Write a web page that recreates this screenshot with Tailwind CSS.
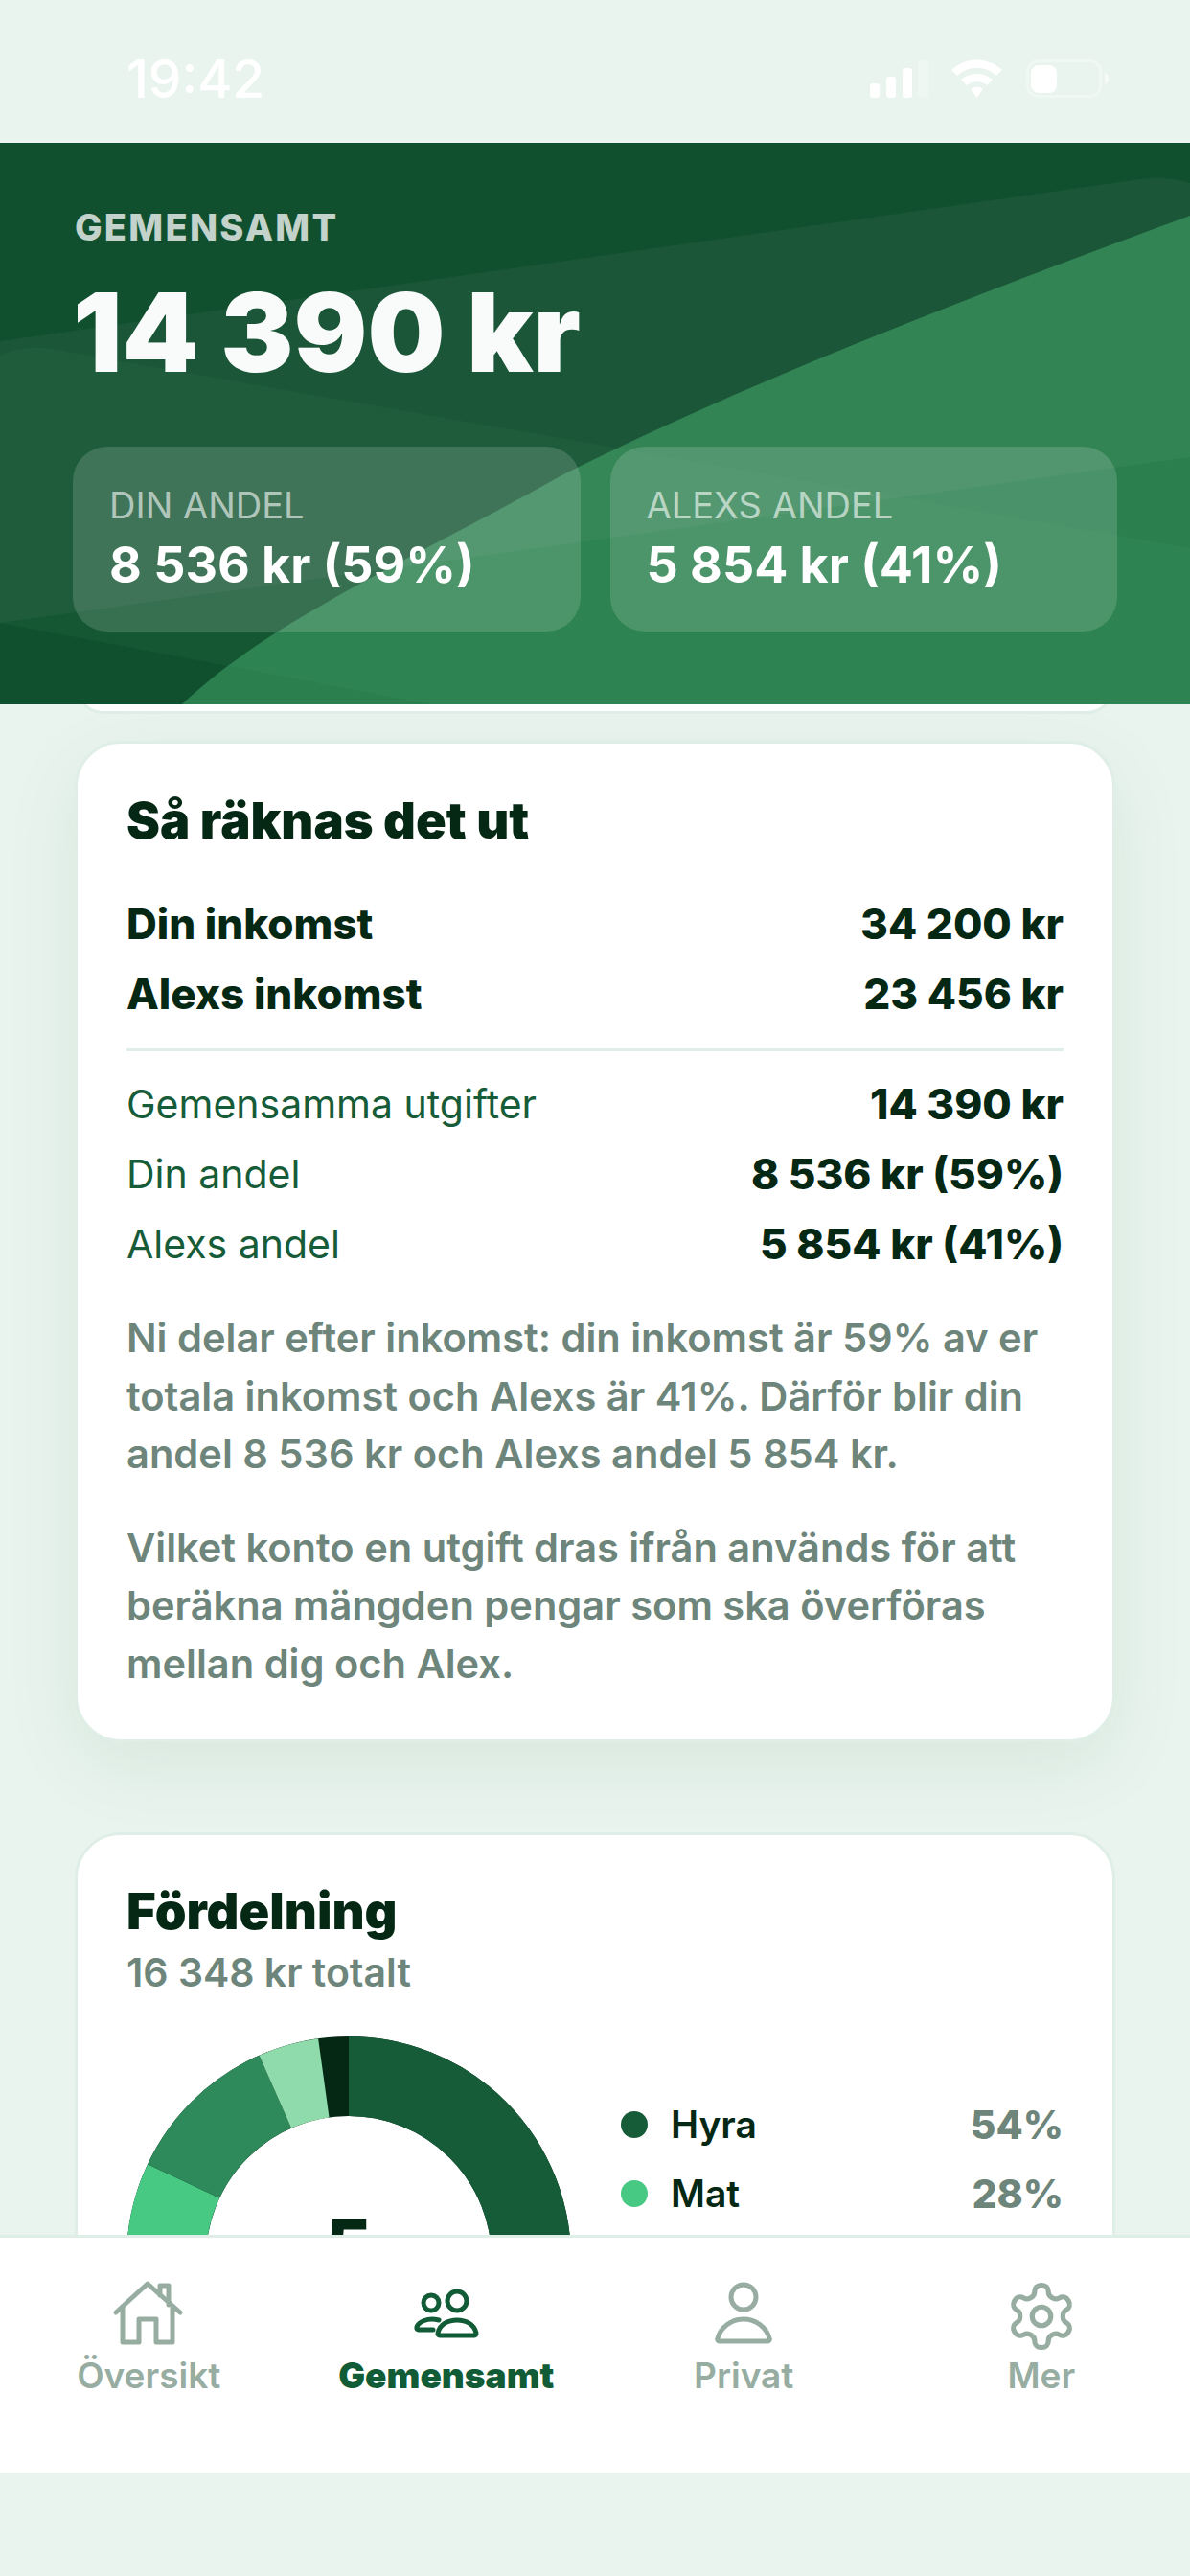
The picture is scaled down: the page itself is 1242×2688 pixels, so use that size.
<!DOCTYPE html>
<html lang="sv">
<head>
    <meta charset="UTF-8">
    <meta name="viewport" content="width=device-width, initial-scale=1.0">
    <title>Gemensamt</title>
    <script src="https://cdn.jsdelivr.net/npm/@tailwindcss/browser@4"></script>
</head>
<body class="bg-[#e9f4ee] font-['Inter',sans-serif] text-[#052814]">
    <div class="w-[1242px] h-[2688px] flex flex-col overflow-hidden">

        <!-- Statusrad -->
        <div class="h-[149px] flex items-start justify-between pl-[132px] pr-[84px]">
            <span class="mt-[51px] text-[55px] leading-[62px] font-medium text-white">19:42</span>
            <svg class="mt-[62px]" width="250" height="40" viewBox="0 0 250 40" fill="#fff">
                <rect x="0" y="25" width="10" height="15" rx="3"/>
                <rect x="17" y="18" width="10" height="22" rx="3"/>
                <rect x="34" y="9" width="10" height="31" rx="3"/>
                <rect x="50" y="1" width="11" height="39" rx="3" fill-opacity="0.25"/>
                <path d="M85 11C100-3 123-3 138 11l-6 6C120 6 103 6 91 17z"/>
                <path d="M95 21c9-8 24-8 33 0l-6 6c-6-5-15-5-21 0z"/>
                <path d="M105 31c4-3 9-3 13 0l-6.500 9z"/>
                <rect x="164.500" y="1.500" width="76" height="37" rx="11" fill="none" stroke="#fff" stroke-opacity="0.35" stroke-width="3"/>
                <rect x="168" y="6" width="27" height="29" rx="8"/>
                <path d="M245 14c3 1 4 3 4 6s-1 5-4 6z" fill-opacity="0.6"/>
            </svg>
        </div>

        <!-- Rubrik med summa och andelar -->
        <header class="relative z-10 h-[586px] bg-[#11502f] px-[76px] overflow-hidden">
            <svg class="absolute inset-0" width="1242" height="586" viewBox="0 0 1242 586">
                <path d="M1242 76C1000 165 780 250 590 345C420 440 280 500 190 586H1242z" fill="#2b7f4f"/>
                <path d="M0 207L1190 38Q1216 34 1242 42V328L0 501z" fill="#fff" fill-opacity="0.04"/>
                <path d="M0 222Q30 208 70 218L1242 423V586H450L0 501z" fill="#50b478" fill-opacity="0.07"/>
            </svg>
            <div class="relative">
                <p class="pt-[66px] text-[38px] leading-[44px] font-extrabold tracking-[0.06em] text-white/75 pl-[2px]">GEMENSAMT</p>
                <p class="mt-[28px] text-[114px] leading-[120px] font-black text-[#f9fbfa]">14 390 kr</p>
                <div class="mt-[59px] flex gap-[31px]">
                    <div class="flex-1 h-[193px] rounded-[36px] bg-white/15 px-[38px] pt-[39px]">
                        <p class="text-[38px] leading-[44px] text-white/60">DIN ANDEL</p>
                        <p class="mt-[11px] text-[52px] leading-[60px] font-bold text-white">8 536 kr (59%)</p>
                    </div>
                    <div class="flex-1 h-[193px] rounded-[36px] bg-white/15 px-[38px] pt-[39px]">
                        <p class="text-[38px] leading-[44px] text-white/60">ALEXS ANDEL</p>
                        <p class="mt-[11px] text-[52px] leading-[60px] font-bold text-white">5 854 kr (41%)</p>
                    </div>
                </div>
            </div>
        </header>

        <main class="h-[1597px] overflow-hidden px-[78px]">
            <!-- Kortet ovanför, bara nederkanten syns -->
            <div class="-mt-[50px] h-[60px] rounded-[48px] border-[3px] border-[#dfeee6] bg-white"></div>

            <section class="mt-[28px] h-[1045px] rounded-[48px] border-[3px] border-[#dfeee6] bg-white px-[51px] pt-[50px] shadow-[0_24px_80px_rgba(22,92,56,0.08)]">
                <h2 class="text-[52.500px] leading-[60px] font-black">Så räknas det ut</h2>
                <div class="mt-[42px] text-[44px] leading-[73px] font-extrabold">
                    <div class="flex justify-between"><span>Din inkomst</span><span>34 200 kr</span></div>
                    <div class="flex justify-between"><span>Alexs inkomst</span><span>23 456 kr</span></div>
                </div>
                <div class="mt-[20px] h-[3px] bg-[#dfeee6]"></div>
                <div class="mt-[19px] leading-[73px]">
                    <div class="flex justify-between"><span class="text-[41px] text-[#165c38]">Gemensamma utgifter</span><span class="text-[44px] font-extrabold">14 390 kr</span></div>
                    <div class="flex justify-between"><span class="text-[41px] text-[#165c38]">Din andel</span><span class="text-[44px] font-extrabold">8 536 kr (59%)</span></div>
                    <div class="flex justify-between"><span class="text-[41px] text-[#165c38]">Alexs andel</span><span class="text-[44px] font-extrabold">5 854 kr (41%)</span></div>
                </div>
                <p class="mt-[31px] text-[41.600px] leading-[60.500px] font-semibold text-[#6d857a]">Ni delar efter inkomst: din inkomst är 59% av er totala inkomst och Alexs är 41%. Därför blir din andel 8 536 kr och Alexs andel 5 854 kr.</p>
                <p class="mt-[37px] text-[41.600px] leading-[60.500px] font-semibold text-[#6d857a]">Vilket konto en utgift dras ifrån används för att beräkna mängden pengar som ska överföras mellan dig och Alex.</p>
            </section>

            <section class="mt-[94px] rounded-[48px] border-[3px] border-[#dfeee6] bg-white px-[51px] pt-[49px] h-[800px]">
                <h2 class="text-[52.500px] leading-[60px] font-black">Fördelning</h2>
                <p class="mt-[9px] text-[41px] leading-[50px] font-semibold text-[#6d857a]">16 348 kr totalt</p>
                <div class="mt-[42px] flex gap-[52px]">
                    <!-- Ringdiagram -->
                    <div class="relative w-[464px] h-[464px] shrink-0">
                        <svg class="-rotate-90" width="464" height="464" viewBox="0 0 464 464" fill="none" stroke-width="83">
                            <circle cx="232" cy="232" r="190.500" pathLength="100" stroke="#052814"/>
                            <circle cx="232" cy="232" r="190.500" pathLength="100" stroke="#165c38" stroke-dasharray="54 46"/>
                            <circle cx="232" cy="232" r="190.500" pathLength="100" stroke="#47c984" stroke-dasharray="28 72" stroke-dashoffset="-54"/>
                            <circle cx="232" cy="232" r="190.500" pathLength="100" stroke="#2f8a5b" stroke-dasharray="11.400 88.600" stroke-dashoffset="-82"/>
                            <circle cx="232" cy="232" r="190.500" pathLength="100" stroke="#90dbab" stroke-dasharray="4.400 95.600" stroke-dashoffset="-93.400"/>
                        </svg>
                        <span class="absolute top-[180px] inset-x-0 text-center text-[72px] leading-none font-black">5</span>
                    </div>
                    <div class="flex-1 pt-[56px] text-[39px] leading-[72px]">
                        <div class="flex items-center">
                            <span class="w-[28px] h-[28px] rounded-full bg-[#165c38] mr-[24px]"></span>
                            <span class="flex-1 font-semibold">Hyra</span>
                            <span class="text-[41px] font-extrabold text-[#6d857a]">54%</span>
                        </div>
                        <div class="flex items-center">
                            <span class="w-[28px] h-[28px] rounded-full bg-[#47c984] mr-[24px]"></span>
                            <span class="flex-1 font-semibold">Mat</span>
                            <span class="text-[41px] font-extrabold text-[#6d857a]">28%</span>
                        </div>
                    </div>
                </div>
            </section>
        </main>

        <!-- Bottenmeny -->
        <nav class="relative z-10 h-[248px] grid grid-cols-4 border-t-[3px] border-[#dfeee6] bg-white pt-[42px] text-[37px] leading-[44px] font-semibold text-[#97ada2]">
            <a class="flex flex-col items-center">
                <svg width="80" height="80" viewBox="0 0 80 80" fill="none" stroke="currentColor" stroke-width="5" stroke-linecap="round" stroke-linejoin="round">
                    <path d="M6 36L39 6L73 36"/>
                    <path d="M52 18V8H61V28"/>
                    <path d="M13 30V67H30V43H48V67H65V30"/>
                </svg>
                <span>Översikt</span>
            </a>
            <a class="flex flex-col items-center font-black text-[#115c36]">
                <svg width="80" height="80" viewBox="0 0 80 80" fill="none" stroke="currentColor" stroke-width="5" stroke-linecap="round" stroke-linejoin="round">
                    <circle cx="51" cy="24" r="10"/>
                    <circle cx="24" cy="26" r="8"/>
                    <path d="M33 60H69a2 2 0 0 0 2-2.500C69 48 60 44 51 44C42 44 33 48 31 57.500a2 2 0 0 0 2 2.500z"/>
                    <path d="M32 44C20 41 11 46 9 51C8.500 53 9.500 54 11 54H26"/>
                </svg>
                <span>Gemensamt</span>
            </a>
            <a class="flex flex-col items-center">
                <svg width="80" height="80" viewBox="0 0 80 80" fill="none" stroke="currentColor" stroke-width="5" stroke-linecap="round" stroke-linejoin="round">
                    <circle cx="40" cy="20" r="13"/>
                    <path d="M15 66H65a2 2 0 0 0 2-3C64 51 52 43 40 43C28 43 16 51 13 63a2 2 0 0 0 2 3z"/>
                </svg>
                <span>Privat</span>
            </a>
            <a class="flex flex-col items-center">
                <svg class="my-[1px]" width="78" height="78" viewBox="0 0 24 24" fill="none" stroke="currentColor" stroke-width="1.600" stroke-linecap="round" stroke-linejoin="round">
                    <path d="M12.220 2h-.44a2 2 0 0 0-2 2v.18a2 2 0 0 1-1 1.730l-.43.25a2 2 0 0 1-2 0l-.15-.08a2 2 0 0 0-2.730.73l-.22.38a2 2 0 0 0 .73 2.730l.15.1a2 2 0 0 1 1 1.720v.51a2 2 0 0 1-1 1.740l-.15.09a2 2 0 0 0-.73 2.730l.22.38a2 2 0 0 0 2.730.73l.15-.08a2 2 0 0 1 2 0l.43.25a2 2 0 0 1 1 1.730V20a2 2 0 0 0 2 2h.44a2 2 0 0 0 2-2v-.18a2 2 0 0 1 1-1.730l.43-.25a2 2 0 0 1 2 0l.15.08a2 2 0 0 0 2.730-.73l.22-.39a2 2 0 0 0-.73-2.730l-.15-.08a2 2 0 0 1-1-1.740v-.5a2 2 0 0 1 1-1.740l.15-.09a2 2 0 0 0 .73-2.730l-.22-.38a2 2 0 0 0-2.730-.73l-.15.08a2 2 0 0 1-2 0l-.43-.25a2 2 0 0 1-1-1.730V4a2 2 0 0 0-2-2z"/>
                    <circle cx="12" cy="12" r="3"/>
                </svg>
                <span>Mer</span>
            </a>
        </nav>
    </div>
</body>
</html>
